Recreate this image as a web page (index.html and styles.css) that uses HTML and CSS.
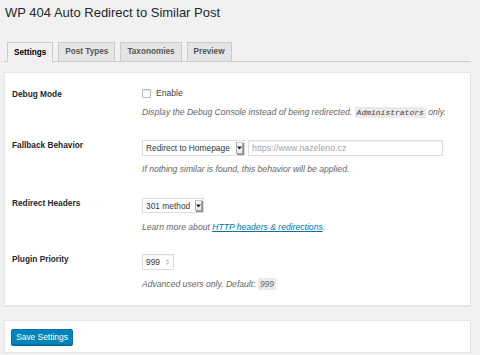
FILE: index.html
```html
<!DOCTYPE html>
<html>
<head>
<meta charset="utf-8">
<link rel="stylesheet" href="styles.css">
</head>
<body>
<div class="wrap">
  <h1 class="title">WP 404 Auto Redirect to Similar Post</h1>
  <nav class="tabs">
    <span class="tab active">Settings</span>
    <span class="tab">Post Types</span>
    <span class="tab">Taxonomies</span>
    <span class="tab">Preview</span>
  </nav>
  <div class="panel main">
    <div class="row r1">
      <div class="label">Debug Mode</div>
      <div class="field">
        <div class="ctl"><span class="checkbox"></span><span class="enable">Enable</span></div>
        <p class="desc">Display the Debug Console instead of being redirected. <code class="code">Administrators</code> only.</p>
      </div>
    </div>
    <div class="row r2">
      <div class="label">Fallback Behavior</div>
      <div class="field">
        <div class="ctl">
          <span class="select wide"><span class="sel-text">Redirect to Homepage</span><span class="arrow"><svg width="5" height="4" viewBox="0 0 5 4"><path d="M0 0.5h5L2.5 3.5z" fill="#222"/></svg></span></span>
          <span class="input url">https://www.nazeleno.cz</span>
        </div>
        <p class="desc">If nothing similar is found, this behavior will be applied.</p>
      </div>
    </div>
    <div class="row r3">
      <div class="label">Redirect Headers</div>
      <div class="field">
        <div class="ctl">
          <span class="select narrow"><span class="sel-text">301 method</span><span class="arrow"><svg width="5" height="4" viewBox="0 0 5 4"><path d="M0 0.5h5L2.5 3.5z" fill="#222"/></svg></span></span>
        </div>
        <p class="desc">Learn more about <a class="link" href="#">HTTP headers &amp; redirections</a>.</p>
      </div>
    </div>
    <div class="row r4">
      <div class="label">Plugin Priority</div>
      <div class="field">
        <div class="ctl">
          <span class="input num"><span>999</span><svg class="spin" width="5" height="8" viewBox="0 0 5 8"><path d="M2.5 1L4.2 3.3H0.8z M2.5 7L0.8 4.7H4.2z" fill="#bbb"/></svg></span>
        </div>
        <p class="desc">Advanced users only. Default: <code class="code sans">999</code></p>
      </div>
    </div>
  </div>
  <div class="panel foot">
    <button class="btn">Save Settings</button>
  </div>
</div>
</body>
</html>
```

FILE: styles.css
```css
* { box-sizing: border-box; }
html, body {
  margin: 0;
  background: #f1f1f1;
  font-family: "Liberation Sans", Arial, sans-serif;
  color: #23282d;
}
.wrap {
  padding: 0 9px 0 4px;
}
.title {
  margin: 0 0 0 1px;
  padding-top: 4px;
  font-size: 13px;
  line-height: 18px;
  font-weight: 400;
  color: #23282d;
}
.tabs {
  margin-top: 20px;
  display: flex;
  gap: 5px;
  padding-left: 3px;
  border-bottom: 1px solid #ccc;
  height: 20px;
  align-items: flex-end;
}
.tab {
  display: block;
  height: 19px;
  line-height: 18px;
  padding: 0 6px;
  border: 1px solid #ccc;
  border-bottom: none;
  background: #e5e5e5;
  color: #555;
  font-size: 8.2px;
  font-weight: 700;
}
.tab.active {
  background: #f1f1f1;
  color: #000;
  height: 20px;
  margin-bottom: -1px;
  padding-top: 1px;
}
.panel {
  background: #fff;
  border: 1px solid #e5e5e5;
  box-shadow: 0 1px 1px rgba(0,0,0,.04);
}
.main {
  margin-top: 10px;
  padding: 16px 0 16px 7px;
}
.row {
  display: grid;
  grid-template-columns: 130px 1fr;
}
.r2 { margin-top: 22px; }
.r3 { margin-top: 24px; }
.r4 { margin-top: 22px; }
.label {
  font-size: 8.3px;
  font-weight: 700;
  line-height: 10px;
  color: #23282d;
}
.ctl {
  display: flex;
  align-items: center;
  gap: 3px;
}
.desc {
  margin: 9px 0 0;
  font-size: 8.6px;
  line-height: 10px;
  font-style: italic;
  color: #666;
}
.r2 .desc { margin-top: 8px; }
.checkbox {
  width: 9px;
  height: 9px;
  border: 1px solid #b4b9be;
  background: #fff;
  box-shadow: inset 0 1px 1px rgba(0,0,0,.1);
  border-radius: 1px;
}
.enable {
  margin-left: 2px;
  font-size: 8.6px;
  line-height: 9px;
  color: #444;
}
.code {
  font-family: "Liberation Mono", monospace;
  font-style: italic;
  font-size: 8px;
  background: #eaeaea;
  padding: 1px 2px;
  color: #444;
}
.code.sans {
  font-family: "Liberation Sans", Arial, sans-serif;
  font-size: 8.4px;
  color: #666;
}
.select {
  display: flex;
  align-items: center;
  justify-content: space-between;
  height: 16px;
  border: 1px solid #ddd;
  background: #fff;
  padding: 1px 1px 1px 3px;
  font-size: 8.4px;
  color: #32373c;
}
.select.wide { width: 103px; }
.select.narrow { width: 62px; height: 15px; }
.arrow {
  display: flex;
  align-items: center;
  justify-content: center;
  width: 7px;
  height: 100%;
  background: linear-gradient(#fafafa, #e8e8e8);
  border: 1px solid #aaa;
  border-top-color: #ccc;
  box-shadow: 1px 1px 0 #888;
}
.input {
  display: flex;
  align-items: center;
  height: 16px;
  border: 1px solid #ddd;
  background: #fff;
  box-shadow: inset 0 1px 1px rgba(0,0,0,.05);
  padding: 0 3px;
  font-size: 8.4px;
  color: #32373c;
}
.url {
  width: 195px;
  font-size: 8.8px;
  color: #a0a5aa;
}
.num {
  width: 32px;
  justify-content: space-between;
}
.link {
  color: #0073aa;
  text-decoration: underline;
}
.foot {
  margin-top: 14px;
  padding: 8px 0 7px 6px;
}
.btn {
  display: block;
  width: 62px;
  height: 16px;
  padding: 0;
  background: #0085ba;
  border: 1px solid #0073aa;
  border-radius: 2px;
  box-shadow: 0 1px 0 #006799;
  color: #fff;
  font-family: "Liberation Sans", Arial, sans-serif;
  font-size: 8.4px;
  line-height: 14px;
}
```
